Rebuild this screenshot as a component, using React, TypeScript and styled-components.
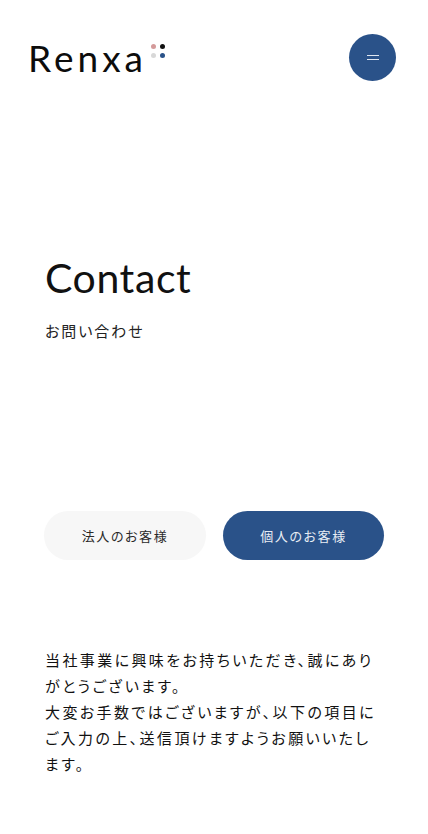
import React from "react";
import styled, { createGlobalStyle } from "styled-components";

const GlobalStyle = createGlobalStyle`
  html, body {
    margin: 0;
    padding: 0;
    background: #fff;
    color: #111;
    font-family: "Noto Sans CJK JP", "Noto Sans", sans-serif;
    font-feature-settings: "palt";
  }
`;

const Page = styled.div`
  width: 428px;
  height: 834px;
  overflow: hidden;
`;

const Header = styled.header`
  display: flex;
  justify-content: space-between;
  align-items: center;
  padding: 34px 32px 0 28px;
`;

const Logo = styled.div`
  display: flex;
  align-items: flex-start;
  gap: 4px;
`;

const LogoText = styled.span`
  font-family: Lato, sans-serif;
  font-size: 37px;
  font-weight: 400;
  line-height: 47px;
  letter-spacing: 4px;
  color: #0c0c0c;
`;

const LogoDots = styled.div`
  display: grid;
  grid-template-columns: 5px 5px;
  gap: 4px;
  margin-top: 10px;
`;

const Dot = styled.span<{ $color: string }>`
  width: 5px;
  height: 5px;
  border-radius: 50%;
  background: ${(p) => p.$color};
`;

const MenuButton = styled.button`
  width: 47px;
  height: 47px;
  padding: 0;
  border: 0;
  border-radius: 50%;
  background: #2a5289;
  display: flex;
  flex-direction: column;
  align-items: center;
  justify-content: center;
  gap: 3px;
`;

const MenuLine = styled.span`
  width: 12px;
  height: 1px;
  background: #dfe6f0;
`;

const Hero = styled.section`
  padding: 172px 0 0 45px;
`;

const Title = styled.h1`
  margin: 0;
  font-family: Lato, sans-serif;
  font-size: 41px;
  font-weight: 400;
  line-height: 50px;
  letter-spacing: 0.6px;
`;

const Subtitle = styled.p`
  margin: 17px 0 0;
  font-size: 15px;
  line-height: 22px;
  letter-spacing: 1.9px;
  color: #222;
`;

const Tabs = styled.div`
  display: grid;
  grid-template-columns: 162px 161px;
  gap: 17px;
  margin: 169px 0 0 44px;
`;

const Tab = styled.button<{ $active?: boolean }>`
  height: 49px;
  padding: 0;
  border: 0;
  border-radius: 25px;
  font-family: inherit;
  font-feature-settings: inherit;
  font-size: 13px;
  letter-spacing: 1.6px;
  background: ${(p) => (p.$active ? "#2a5289" : "#f7f7f7")};
  color: ${(p) => (p.$active ? "#e8edf4" : "#2a2a2a")};
`;

const Intro = styled.p`
  width: 332px;
  margin: 87px 0 0 45px;
  font-size: 15px;
  line-height: 26px;
  letter-spacing: 2.4px;
  color: #111;
`;

export default function App() {
  return (
    <Page>
      <GlobalStyle />
      <Header>
        <Logo>
          <LogoText>Renxa</LogoText>
          <LogoDots>
            <Dot $color="#d49a9a" />
            <Dot $color="#111" />
            <Dot $color="#d8d8d8" />
            <Dot $color="#2a5289" />
          </LogoDots>
        </Logo>
        <MenuButton aria-label="メニュー">
          <MenuLine />
          <MenuLine />
        </MenuButton>
      </Header>
      <Hero>
        <Title>Contact</Title>
        <Subtitle>お問い合わせ</Subtitle>
      </Hero>
      <Tabs>
        <Tab>法人のお客様</Tab>
        <Tab $active>個人のお客様</Tab>
      </Tabs>
      <Intro>
        当社事業に興味をお持ちいただき、誠にありがとうございます。
        <br />
        大変お手数ではございますが、以下の項目にご入力の上、送信頂けますようお願いいたします。
      </Intro>
    </Page>
  );
}
